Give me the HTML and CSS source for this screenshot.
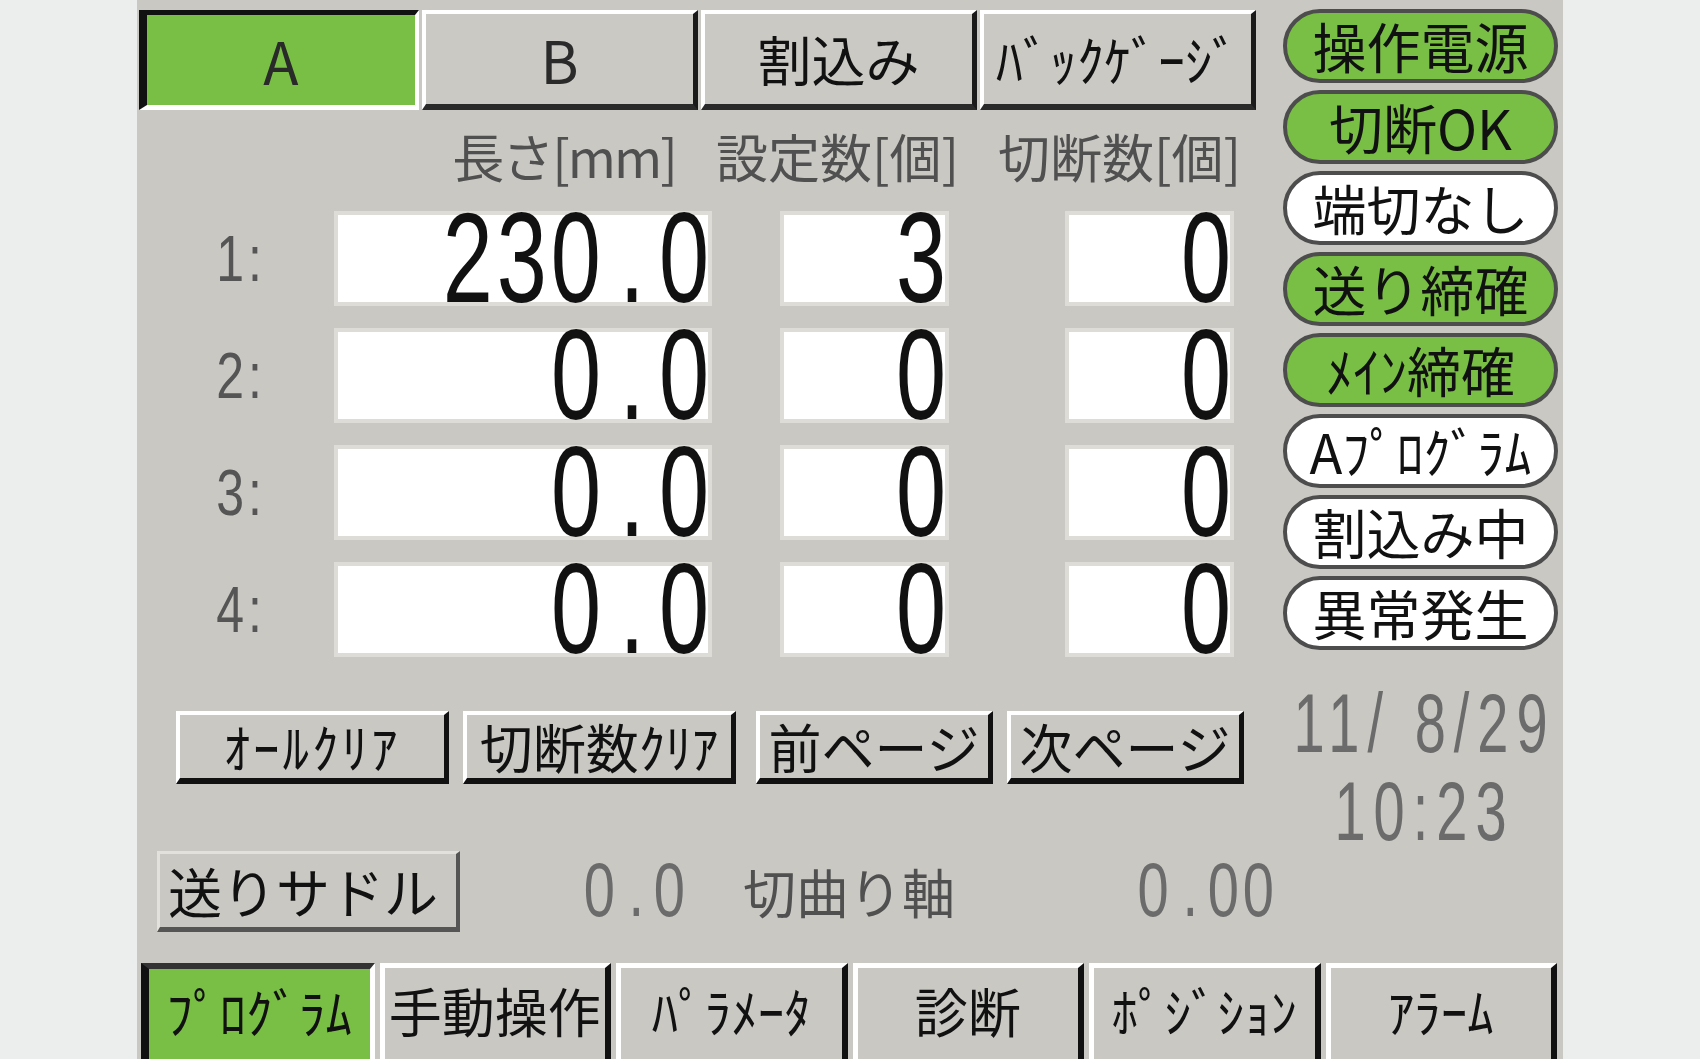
FILE: index.html
```html
<!DOCTYPE html>
<html lang="ja">
<head>
    <meta charset="UTF-8">
    <meta name="viewport" content="width=device-width, initial-scale=1.0">
    <title>プログラム</title>
    <link rel="stylesheet" href="styles.css">
</head>
<body>
    <div class="panel">
        <div class="upper">
            <div class="main">
                <!-- Page tabs -->
                <div class="page-tabs">
                    <div class="tab tab-active latin">A</div>
                    <div class="tab latin">B</div>
                    <div class="tab">割込み</div>
                    <div class="tab">ﾊﾞｯｸｹﾞｰｼﾞ</div>
                </div>

                <!-- Column headings -->
                <div class="col-heads">
                    <span class="head head-len">長さ[mm]</span>
                    <span class="head head-set">設定数[個]</span>
                    <span class="head head-cut">切断数[個]</span>
                </div>

                <!-- Program rows -->
                <div class="rows">
                    <div class="row-label"><span class="lcd">1:</span></div>
                    <div class="field field-len"><span class="lcd">230<span class="pt">.</span>0</span></div>
                    <div class="field"><span class="lcd">3</span></div>
                    <div class="field"><span class="lcd">0</span></div>

                    <div class="row-label"><span class="lcd">2:</span></div>
                    <div class="field field-len"><span class="lcd">0<span class="pt">.</span>0</span></div>
                    <div class="field"><span class="lcd">0</span></div>
                    <div class="field"><span class="lcd">0</span></div>

                    <div class="row-label"><span class="lcd">3:</span></div>
                    <div class="field field-len"><span class="lcd">0<span class="pt">.</span>0</span></div>
                    <div class="field"><span class="lcd">0</span></div>
                    <div class="field"><span class="lcd">0</span></div>

                    <div class="row-label"><span class="lcd">4:</span></div>
                    <div class="field field-len"><span class="lcd">0<span class="pt">.</span>0</span></div>
                    <div class="field"><span class="lcd">0</span></div>
                    <div class="field"><span class="lcd">0</span></div>
                </div>

                <!-- Action buttons -->
                <div class="actions">
                    <div class="btn btn-wide spaced">ｵｰﾙｸﾘｱ</div>
                    <div class="btn btn-wide">切断数ｸﾘｱ</div>
                    <div class="btn btn-page btn-sep">前ページ</div>
                    <div class="btn btn-page">次ページ</div>
                </div>
            </div>

            <!-- Status lamps and clock -->
            <div class="side">
                <div class="lamps">
                    <div class="lamp lamp-on">操作電源</div>
                    <div class="lamp lamp-on">切断OK</div>
                    <div class="lamp">端切なし</div>
                    <div class="lamp lamp-on">送り締確</div>
                    <div class="lamp lamp-on">ﾒｲﾝ締確</div>
                    <div class="lamp">Aﾌﾟﾛｸﾞﾗﾑ</div>
                    <div class="lamp">割込み中</div>
                    <div class="lamp">異常発生</div>
                </div>
                <div class="clock">
                    <div class="clock-line"><span class="lcd">11/ 8/29</span></div>
                    <div class="clock-line clock-time"><span class="lcd">10:23</span></div>
                </div>
            </div>
        </div>

        <!-- Axis positions -->
        <div class="axis">
            <div class="axis-btn">送りサドル</div>
            <div class="axis-value"><span class="lcd">0<span class="pt">.</span>0</span></div>
            <div class="axis-label">切曲り軸</div>
            <div class="axis-value axis-value-wide"><span class="lcd">0<span class="pt">.</span>00</span></div>
        </div>

        <!-- Screen menu -->
        <div class="menu-tabs">
            <div class="menu-tab menu-active">ﾌﾟﾛｸﾞﾗﾑ</div>
            <div class="menu-tab">手動操作</div>
            <div class="menu-tab">ﾊﾟﾗﾒｰﾀ</div>
            <div class="menu-tab">診断</div>
            <div class="menu-tab">ﾎﾟｼﾞｼｮﾝ</div>
            <div class="menu-tab">ｱﾗｰﾑ</div>
        </div>
    </div>
</body>
</html>
```

FILE: styles.css
```css
/* Operator panel screen */
body {
    margin: 0;
    background-color: #eceeed;
    font-family: "Noto Sans CJK JP", sans-serif;
    color: #111;
}
.panel {
    width: 1426px;
    height: 1059px;
    margin-left: 137px;
    background-color: #c9c8c3;
    overflow: hidden;
}
.upper {
    display: flex;
    height: 845px;
}
.main {
    width: 1146px;
}
.side {
    width: 275px;
}

/* Tall narrow digits, like the panel's own font */
.lcd {
    display: inline-block;
    font-family: "Liberation Sans", sans-serif;
    line-height: 0.72;
    white-space: pre;
    transform: scaleY(1.4);
}
.pt {
    display: inline-block;
    text-align: center;
    letter-spacing: 0;
}

/* Page tabs */
.page-tabs {
    display: flex;
    gap: 3px;
    margin: 10px 0 0 2px;
}
.tab {
    box-sizing: border-box;
    width: 276px;
    height: 100px;
    display: flex;
    align-items: center;
    justify-content: center;
    font-size: 54px;
    line-height: 1;
    background-color: #cac9c4;
    border-top: 4px solid #fff;
    border-left: 4px solid #fff;
    border-right: 5px solid #1a1a1a;
    border-bottom: 6px solid #2a2a2a;
}
.tab.latin {
    font-size: 58px;
    color: #2a2a2a;
}
.tab-active {
    width: 280px;
    background-color: #7abf45;
    border-top: 5px solid #111;
    border-left: 8px solid #111;
    border-right: 4px solid #fff;
    border-bottom: 5px solid #fff;
}

/* Column headings */
.col-heads {
    display: flex;
    height: 58px;
    padding: 18px 0 0 314px;
    color: #505050;
    font-size: 52px;
    line-height: 56px;
    white-space: nowrap;
}
.head {
    text-align: center;
}
.head-len {
    width: 226px;
    letter-spacing: -2px;
}
.head-set {
    width: 255px;
    margin-left: 33px;
}
.head-cut {
    width: 255px;
    margin-left: 27px;
}

/* Rows */
.rows {
    display: grid;
    grid-template-columns: 197px 446px 285px 169px;
    grid-auto-rows: 95px;
    row-gap: 22px;
    margin-top: 25px;
}
.row-label {
    display: flex;
    align-items: center;
    justify-content: flex-end;
    padding-right: 68px;
    color: #555;
}
.row-label .lcd {
    font-size: 50px;
    letter-spacing: 4px;
    transform: scaleY(1.3);
}
.field {
    box-sizing: border-box;
    width: 169px;
    display: flex;
    align-items: center;
    justify-content: flex-end;
    background-color: #fff;
    border: 4px solid #dddcd7;
}
.field-len {
    width: 378px;
}
.field .lcd {
    font-size: 90px;
    letter-spacing: 4px;
    margin-right: -5px;
    transform: scaleY(1.42);
}
.field .pt {
    width: 54px;
}

/* Action buttons */
.actions {
    display: flex;
    gap: 14px;
    margin: 54px 0 0 39px;
}
.btn {
    box-sizing: border-box;
    height: 73px;
    display: flex;
    align-items: center;
    justify-content: center;
    font-size: 53px;
    line-height: 1;
    white-space: nowrap;
    border-top: 4px solid #fff;
    border-left: 4px solid #fff;
    border-right: 5px solid #111;
    border-bottom: 6px solid #111;
}
.btn-wide {
    width: 273px;
}
.btn-page {
    width: 237px;
}
.btn-sep {
    margin-left: 6px;
}
.spaced {
    letter-spacing: 3px;
}

/* Status lamps */
.lamps {
    display: flex;
    flex-direction: column;
    gap: 7px;
    padding-top: 9px;
}
.lamp {
    box-sizing: border-box;
    height: 74px;
    display: flex;
    align-items: center;
    justify-content: center;
    font-size: 54px;
    line-height: 1;
    white-space: nowrap;
    background-color: #fff;
    border: 4px solid #4d4d4d;
    border-radius: 37px;
}
.lamp-on {
    background-color: #7abf45;
}

/* Clock */
.clock {
    margin-top: 54px;
    text-align: center;
    color: #6b6b6b;
}
.clock-line {
    height: 60px;
    line-height: 60px;
}
.clock-line .lcd {
    font-size: 56px;
    letter-spacing: 8px;
    margin-right: -8px;
    transform: scaleY(1.48);
}
.clock-time {
    margin-top: 28px;
}

/* Axis positions */
.axis {
    display: flex;
    align-items: center;
    height: 81px;
    margin-top: 6px;
}
.axis-btn {
    box-sizing: border-box;
    width: 303px;
    height: 81px;
    margin-left: 20px;
    padding-left: 8px;
    display: flex;
    align-items: center;
    font-size: 54px;
    line-height: 1;
    white-space: nowrap;
    border-top: 3px solid #e2e1dc;
    border-left: 3px solid #e2e1dc;
    border-right: 4px solid #555;
    border-bottom: 5px solid #555;
}
.axis-value {
    width: 225px;
    text-align: right;
    color: #6b6b6b;
}
.axis-value .lcd {
    font-size: 56px;
    letter-spacing: 4px;
    margin-right: -4px;
    transform: scaleY(1.35);
}
.axis-value .pt {
    width: 35px;
}
.axis-value-wide {
    width: 320px;
}
.axis-label {
    width: 211px;
    margin-left: 58px;
    color: #505050;
    font-size: 53px;
    line-height: 1;
    white-space: nowrap;
}

/* Screen menu */
.menu-tabs {
    display: flex;
    gap: 5px;
    margin: 31px 6px 0 4px;
}
.menu-tab {
    flex: 1;
    box-sizing: border-box;
    height: 110px;
    padding-top: 15px;
    text-align: center;
    font-size: 53px;
    line-height: 54px;
    white-space: nowrap;
    border-top: 5px solid #fff;
    border-left: 5px solid #fff;
    border-right: 6px solid #111;
}
.menu-active {
    background-color: #7abf45;
    border-top: 6px solid #333;
    border-left: 8px solid #111;
    border-right: 5px solid #fff;
}
```
